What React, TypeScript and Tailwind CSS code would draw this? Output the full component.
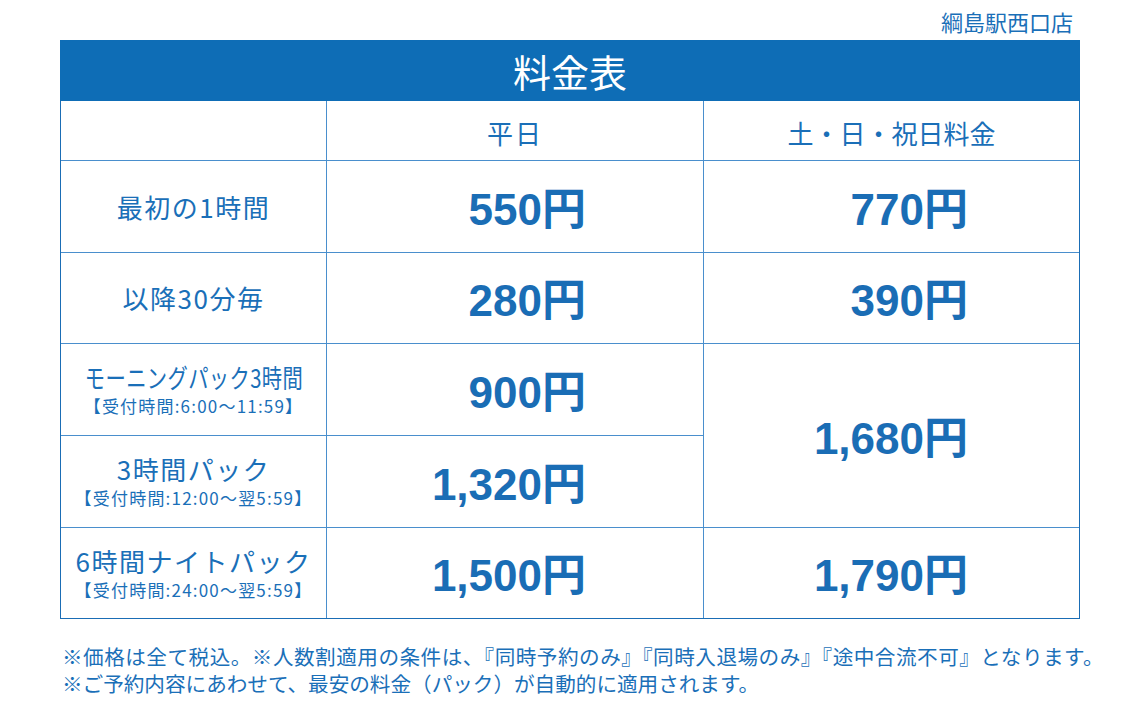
import React from "react";

const jp = "font-['Noto_Sans_CJK_JP','Noto_Sans',sans-serif]";
const price = "font-['Liberation_Sans','Noto_Sans_CJK_JP',sans-serif] font-bold text-[44px] leading-none text-[#1a6db5]";

function Label({ main, sub, condensed }: { main: string; sub?: string; condensed?: boolean }) {
  return (
    <div className="bg-white flex flex-col items-center justify-center text-[#1a6fb8]">
      <div className={`text-[26px] leading-[30px] whitespace-nowrap ${condensed ? "scale-x-[0.78] tracking-[0.5px]" : "tracking-[1.5px]"}`}>{main}</div>
      {sub && <div className="text-[17px] leading-[22px] mt-[3px] tracking-[1.2px] whitespace-nowrap">{sub}</div>}
    </div>
  );
}

function Price({ v, col, className = "" }: { v: string; col: 2 | 3; className?: string }) {
  return (
    <div className={`bg-white flex items-center justify-end pt-[6px] ${col === 2 ? "pr-[117px]" : "pr-[111px]"} ${className}`}>
      <span className={price}>{v}</span>
    </div>
  );
}

export default function App() {
  return (
    <div className={`w-[1135px] h-[726px] bg-white ${jp} text-[#1a6fb8]`}>
      <div className="pl-[60px] pr-[55px]">
        <div className="h-[40px] flex items-center justify-end pr-[7px] text-[22px] leading-none pt-[2px]">綱島駅西口店</div>
        <div className="h-[61px] bg-[#0e6db6] text-white text-[38px] flex items-center justify-center leading-none">料金表</div>
        <div className="grid grid-cols-[265px_376px_375px] grid-rows-[59px_91px_90px_91px_91px_90px] gap-px bg-[#4a8fcd] border-x border-b border-[#1a6db5]">
          <div className="bg-white" />
          <div className="bg-white flex items-center justify-center text-[26px] tracking-[2px] pt-[4px]">平日</div>
          <div className="bg-white flex items-center justify-center text-[26px] pt-[4px]">土・日・祝日料金</div>

          <Label main="最初の1時間" />
          <Price v="550円" col={2} />
          <Price v="770円" col={3} />

          <Label main="以降30分毎" />
          <Price v="280円" col={2} />
          <Price v="390円" col={3} />

          <Label main="モーニングパック3時間" sub="【受付時間:6:00～11:59】" condensed />
          <Price v="900円" col={2} />
          <Price v="1,680円" col={3} className="row-span-2" />

          <Label main="3時間パック" sub="【受付時間:12:00～翌5:59】" />
          <Price v="1,320円" col={2} />

          <Label main="6時間ナイトパック" sub="【受付時間:24:00～翌5:59】" />
          <Price v="1,500円" col={2} />
          <Price v="1,790円" col={3} />
        </div>
        <div className="mt-[24px] pl-[2px] text-[20.6px] leading-[27px] whitespace-nowrap">
          <div className="tracking-[0.5px]">※価格は全て税込。※人数割適用の条件は、『同時予約のみ』『同時入退場のみ』『途中合流不可』となります。</div>
          <div>※ご予約内容にあわせて、最安の料金（パック）が自動的に適用されます。</div>
        </div>
      </div>
    </div>
  );
}
